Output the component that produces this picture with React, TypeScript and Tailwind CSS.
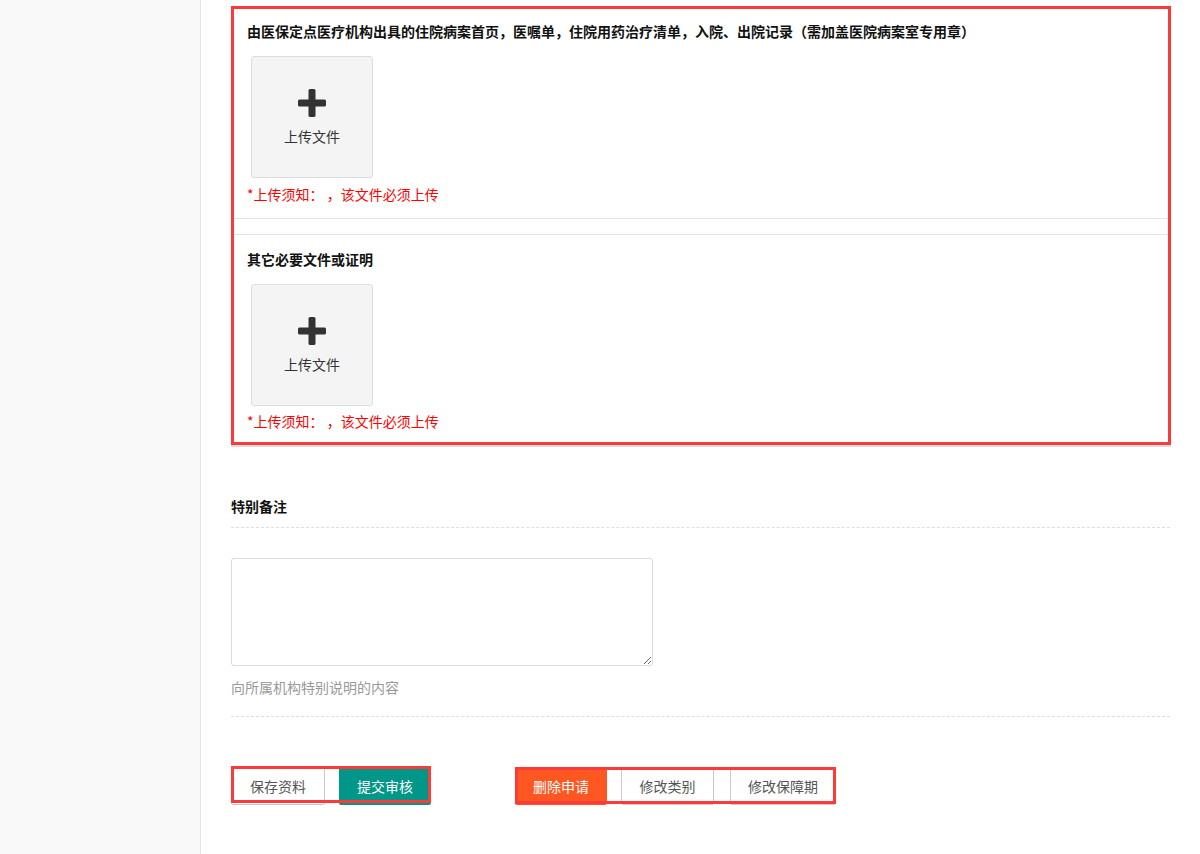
import React from "react";

const FONT = { fontFamily: '"Noto Sans CJK SC", "Noto Sans", sans-serif' };

function PlusIcon() {
  return (
    <svg width="28" height="28" viewBox="0 0 28 28" aria-hidden="true">
      <rect x="0" y="10.5" width="28" height="7" rx="1.5" fill="#333" />
      <rect x="10.5" y="0" width="7" height="28" rx="1.5" fill="#333" />
    </svg>
  );
}

function UploadBox() {
  return (
    <div className="w-[122px] h-[122px] bg-[#f4f4f4] border border-[#dedede] rounded-[3px] flex flex-col items-center justify-center gap-[9px]">
      <PlusIcon />
      <span className="text-[14px] leading-[20px] text-[#333]">上传文件</span>
    </div>
  );
}

function Note() {
  return (
    <div className="text-[14px] leading-[20px] text-[#ff0000]">*上传须知： ，该文件必须上传</div>
  );
}

export default function App() {
  return (
    <div className="flex w-[1200px] h-[854px] overflow-hidden bg-white" style={FONT}>
      <aside className="w-[201px] shrink-0 h-full bg-[#f9f9f9] border-r border-[#e4e4e4]" />
      <main className="flex-1 pl-[30px] pr-[29px]">
        {/* highlighted upload panel */}
        <div className="mt-[6px] w-[940px] border-[3px] border-[#fb3a3a] shadow-[0_2px_0_#dcdcdc]">
          <section className="pt-[12px] pl-[13px] pb-[14px] border-b border-[#e2e2e2]">
            <h3 className="text-[14px] leading-[20px] font-bold text-[#111]">
              由医保定点医疗机构出具的住院病案首页，医嘱单，住院用药治疗清单，入院、出院记录（需加盖医院病案室专用章）
            </h3>
            <div className="mt-[15px] ml-[4px]">
              <UploadBox />
            </div>
            <div className="mt-[6px]">
              <Note />
            </div>
          </section>
          <section className="mt-[15px] pt-[14px] pl-[13px] pb-[11px] border-t border-[#e2e2e2]">
            <h3 className="text-[14px] leading-[20px] font-bold text-[#111]">其它必要文件或证明</h3>
            <div className="mt-[15px] ml-[4px]">
              <UploadBox />
            </div>
            <div className="mt-[5px]">
              <Note />
            </div>
          </section>
        </div>

        {/* special remarks */}
        <div className="mt-[51px] w-[939px]">
          <div className="pb-[11px] border-b border-dashed border-[#dedede]">
            <h3 className="text-[14px] leading-[20px] font-bold text-[#111]">特别备注</h3>
          </div>
          <div className="pt-[30px] pb-[19px] border-b border-dashed border-[#dedede]">
            <textarea className="block w-[422px] h-[108px] border border-[#dcdcdc] rounded-[3px] bg-white outline-none" />
            <div className="mt-[11px] text-[14px] leading-[20px] text-[#999]">向所属机构特别说明的内容</div>
          </div>
        </div>

        {/* buttons */}
        <div className="mt-[50px] flex items-start">
          <div className="relative flex gap-[14px]">
            <button className="w-[94px] h-[38px] border border-[#c9c9c9] bg-white text-[14px] text-[#555] rounded-[2px]">
              保存资料
            </button>
            <button className="w-[92px] h-[38px] bg-[#009688] text-[14px] text-white rounded-[2px]">
              提交审核
            </button>
            <div className="absolute left-0 -top-px w-[200px] h-[37px] border-[3px] border-[#fb3a3a] pointer-events-none" />
          </div>
          <div className="relative ml-[84px] flex">
            <button className="w-[92px] h-[38px] bg-[#ff5722] text-[14px] text-white rounded-[2px]">
              删除申请
            </button>
            <button className="ml-[14px] w-[93px] h-[38px] border border-[#c9c9c9] bg-white text-[14px] text-[#555] rounded-[2px]">
              修改类别
            </button>
            <button className="ml-[16px] w-[106px] h-[38px] border border-[#c9c9c9] bg-white text-[14px] text-[#555] rounded-[2px]">
              修改保障期
            </button>
            <div className="absolute left-0 top-0 w-[321px] h-[37px] border-[3px] border-[#fb3a3a] pointer-events-none" />
          </div>
        </div>
      </main>
    </div>
  );
}
